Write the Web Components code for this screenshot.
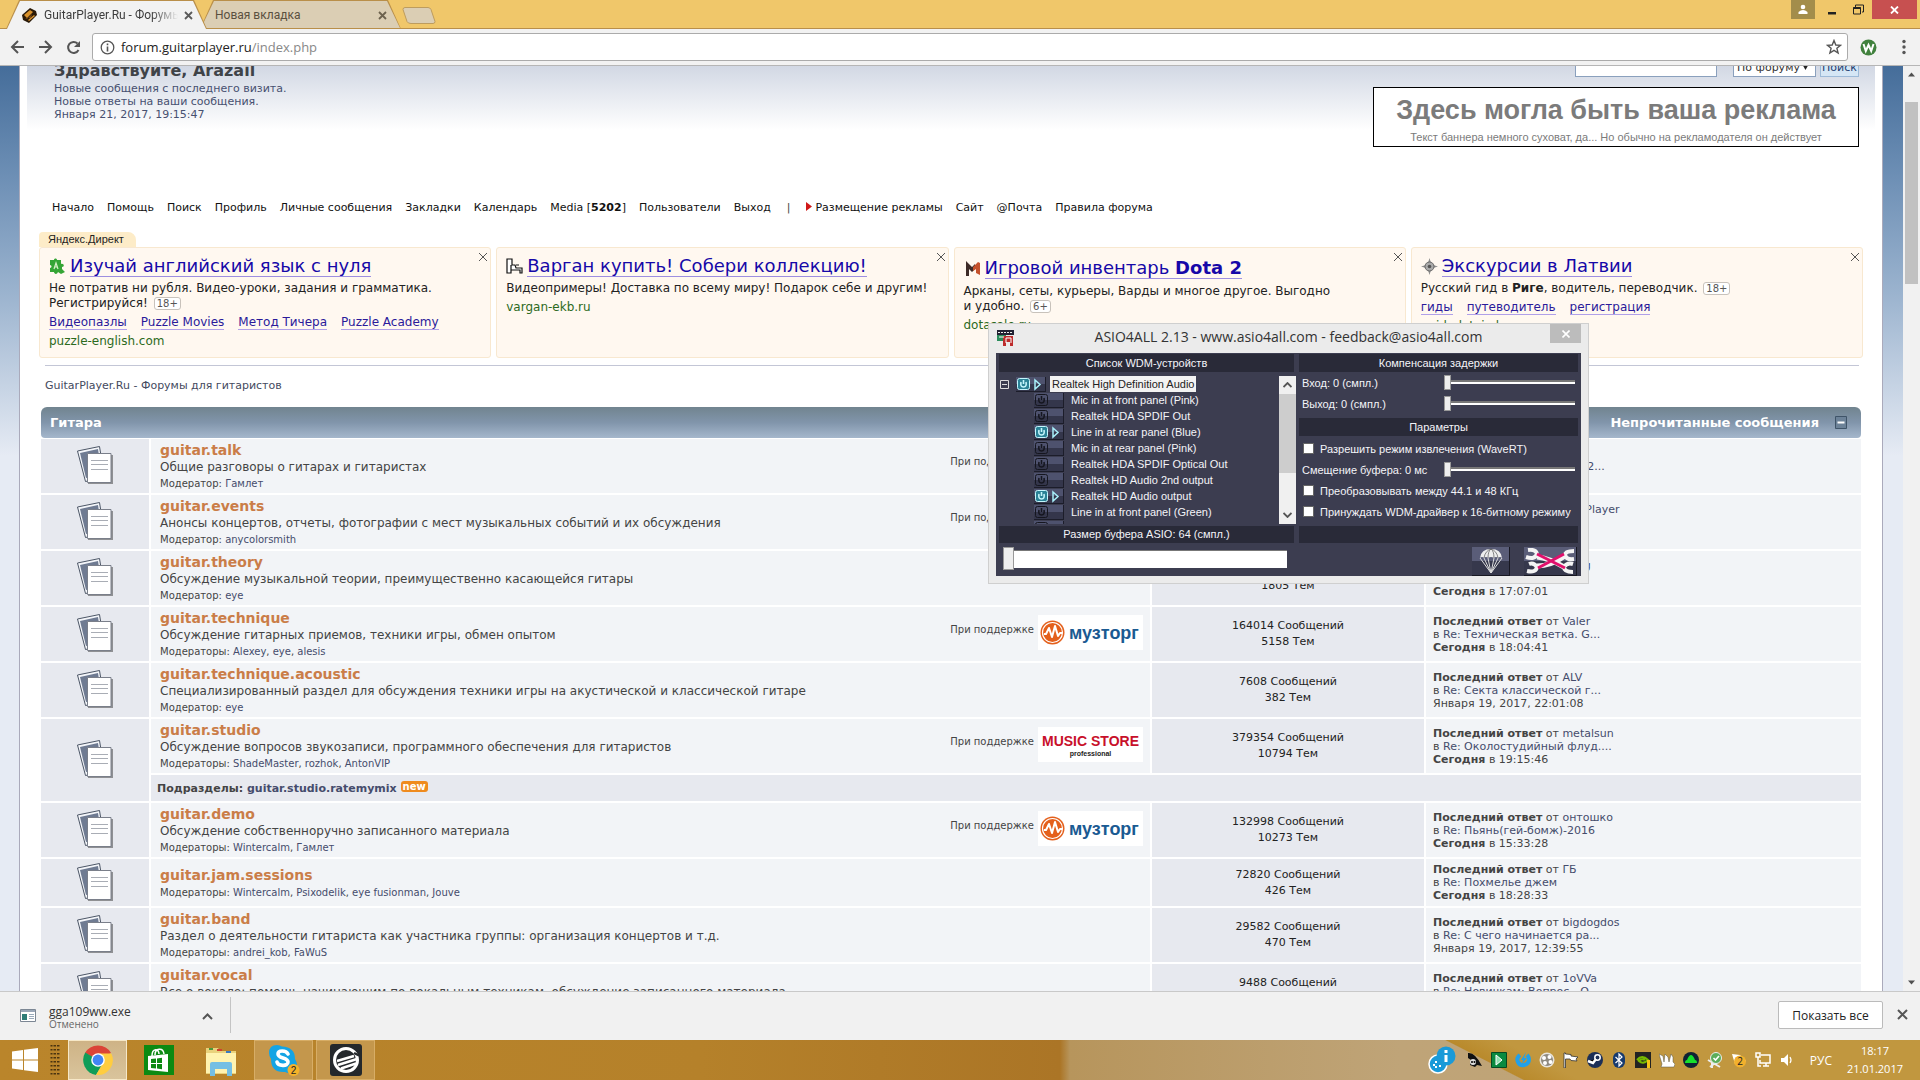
<!DOCTYPE html>
<html lang="ru">
<head>
<meta charset="utf-8">
<title>GuitarPlayer.Ru - Форумы для гитаристов</title>
<style>
  html, body { height: 100%; margin: 0; }
  body { overflow: hidden; font-family: "DejaVu Sans", sans-serif; font-size: 11px; color: #444; }
</style>
</head>
<body>
<desktop-screen>
  <tab-strip slot="tabs"></tab-strip>
  <browser-toolbar slot="toolbar"></browser-toolbar>
  <page-view slot="page">
    <forum-header></forum-header>
    <ad-row>
      <ad-card href-text="puzzle-english.com">
        <svg slot="icon" width="17" height="17" viewBox="0 0 17 17"><path fill="#35a535" d="M1 2h4c0-2 3-2 3 0h4v4c3-1 4 3 1 3v2l3 3-4 2-3-2c-1 3-4 2-4 0H1v-4c2 0 2-3 0-3z"/><path fill="none" stroke="#d8f0c8" stroke-width="1.200" d="m5 11 2-6 2 6m-3.500-2h3"/></svg>
        <span slot="title">Изучай английский язык с нуля</span>
        Не потратив ни рубля. Видео-уроки, задания и грамматика. Регистрируйся! <age-mark>18+</age-mark>
        <a slot="links" href="#">Видеопазлы</a><a slot="links" href="#">Puzzle Movies</a><a slot="links" href="#">Метод Тичера</a><a slot="links" href="#">Puzzle Academy</a>
      </ad-card>
      <ad-card href-text="vargan-ekb.ru">
        <svg slot="icon" width="17" height="17" viewBox="0 0 17 17"><path fill="#fff" stroke="#111" stroke-width="1.200" d="M1 1h5v6h3l1 3h6v5h-2v-3H5v3H1zM5 7v5M10 7h3"/></svg>
        <span slot="title">Варган купить! Собери коллекцию!</span>
        Видеопримеры! Доставка по всему миру! Подарок себе и другим!
      </ad-card>
      <ad-card href-text="dotasale.ru" tall>
        <svg slot="icon" width="17" height="17" viewBox="0 0 17 17"><path fill="#3d2b28" d="M2 1 8 7l3-3v5l-3 3-3-3v7H2z"/><path fill="#c4512c" d="m9 7 5-5 2 1v12l-4-2V9l-3 2z"/></svg>
        <span slot="title">Игровой инвентарь <b>Dota 2</b></span>
        Арканы, сеты, курьеры, Варды и многое другое. Выгодно<br>и удобно. <age-mark>6+</age-mark>
      </ad-card>
      <ad-card href-text="guide-latvia.lv">
        <svg slot="icon" width="17" height="17" viewBox="0 0 17 17"><path fill="#8d8d8d" d="m8.500 0 2 6.500 6.500 2-6.500 2-2 6.500-2-6.500-6.500-2 6.500-2z"/><circle cx="8.500" cy="8.500" r="4.500" fill="#aaa" stroke="#666"/><circle cx="8.500" cy="8.500" r="1.800" fill="#555"/></svg>
        <span slot="title">Экскурсии в Латвии</span>
        Русский гид в <b>Риге</b>, водитель, переводчик. <age-mark>18+</age-mark>
        <a slot="links" href="#">гиды</a><a slot="links" href="#">путеводитель</a><a slot="links" href="#">регистрация</a>
      </ad-card>
    </ad-row>
    <bread-crumb>GuitarPlayer.Ru - Форумы для гитаристов</bread-crumb>
    <forum-board></forum-board>
  </page-view>
  <download-shelf slot="shelf"></download-shelf>
  <task-bar slot="taskbar"></task-bar>
  <asio-dialog slot="window"></asio-dialog>
</desktop-screen>

<script>
const define = (name, html, setup) => customElements.define(name, class extends HTMLElement {
  constructor() {
    super();
    const t = document.createElement('template');
    t.innerHTML = html;
    this.attachShadow({ mode: 'open' }).append(t.content.cloneNode(true));
  }
  connectedCallback() { if (setup) setup(this, this.shadowRoot); }
});

define('desktop-screen', `
<style>
  :host { display: grid; grid-template-rows: 29px 37px minmax(0, 1fr) 49px 40px; height: 100vh; position: relative; }
</style>
<slot name="tabs"></slot><slot name="toolbar"></slot><slot name="page"></slot><slot name="shelf"></slot><slot name="taskbar"></slot><slot name="window"></slot>`);

define('tab-strip', `
<style>
  :host { display: flex; justify-content: space-between; align-items: flex-start; background: #f0c76a; border-bottom: 1px solid #b98f4a; box-sizing: border-box; color: #3c3c3c; }
  .tabs { display: flex; align-items: flex-start; padding-left: 6px; }
  .tab { display: flex; align-items: center; gap: 6px; height: 29px; width: 201px; box-sizing: border-box; padding: 1px 14px 0 15px; background: #b98f4a; clip-path: polygon(13px 0, 188px 0, 100% 100%, 0 100%); position: relative; z-index: 1; isolation: isolate; }
  .tab::before { content: ""; position: absolute; inset: 1px 0 0; z-index: -1; background: #f2f2f2; clip-path: polygon(14px 0, 187px 0, 200px 100%, 1px 100%); }
  .tab.idle { margin-left: -7px; z-index: 0; color: #5a5040; }
  .tab.idle::before { background: #dbceb4; inset: 1px 0 1px; }
  .label { flex: 1; overflow: hidden; white-space: nowrap; font: 12px/18px Roboto, sans-serif; }
  .fade { -webkit-mask: linear-gradient(90deg, #000 80%, transparent); mask: linear-gradient(90deg, #000 80%, transparent); }
  button { border: 0; background: none; padding: 0; display: grid; place-items: center; }
  .new { margin: 7px 0 0 1px; }
  .win { display: flex; }
  .win button { height: 19px; }
  .user { width: 24px; background: #a38d4b; } .min { width: 34px; } .max { width: 18px; } .close { width: 45px; margin: 0 3px 0 5px; }
  .win .close { background: #c75050; }
</style>
<div class="tabs">
  <div class="tab">
    <svg width="17" height="16" viewBox="0 0 17 16"><path fill="#2a1a08" d="M1 8 9 1l6 3 1 4-8 8-6-3z"/><path fill="#d9922c" d="m3 8 6-5 3 2-6 6zM7 13l6-5 1 1-6 5z"/><path fill="#7b4a13" d="m4 11 2 1 5-5-1 4"/></svg>
    <span class="label fade">GuitarPlayer.Ru - Форумы</span>
    <button aria-label="Закрыть"><svg width="9" height="9" viewBox="0 0 9 9"><path stroke="#5a5a5a" stroke-width="1.800" d="m1 1 7 7m0-7-7 7"/></svg></button>
  </div>
  <div class="tab idle">
    <span class="label">Новая вкладка</span>
    <button aria-label="Закрыть"><svg width="9" height="9" viewBox="0 0 9 9"><path stroke="#6d624e" stroke-width="1.800" d="m1 1 7 7m0-7-7 7"/></svg></button>
  </div>
  <button class="new" aria-label="Новая вкладка"><svg width="34" height="17" viewBox="0 0 34 17"><path fill="#dbceb4" stroke="#bd9c5e" d="M3 .5h23q2 0 3 2l4 12q0 2-2 2H9q-3 0-4-2L1 2.500Q1 .5 3 .5z"/></svg></button>
</div>
<div class="win">
  <button class="user" aria-label="Профиль"><svg width="10" height="11" viewBox="0 0 10 11"><circle cx="5" cy="3" r="2.300" fill="#fff"/><path fill="#fff" d="M.5 10V8q4.500-4 9 0v2z"/></svg></button>
  <button class="min" aria-label="Свернуть"><svg width="10" height="11" viewBox="0 0 10 11"><path fill="#222" d="M1 8h8v2.500H1z"/></svg></button>
  <button class="max" aria-label="Развернуть"><svg width="11" height="11" viewBox="0 0 11 11"><path fill="none" stroke="#222" d="M2.500 3V1h8v7H9"/><path fill="none" stroke="#222" d="M.5 3.500h7v6.500h-7z"/><path stroke="#222" stroke-width="2" d="M.5 4h7"/></svg></button>
  <button class="close" aria-label="Закрыть окно"><svg width="9" height="8" viewBox="0 0 9 8"><path stroke="#fff" stroke-width="1.800" d="m1 .5 7 7m0-7-7 7"/></svg></button>
</div>`);

define('browser-toolbar', `
<style>
  :host { display: flex; align-items: center; background: #f2f2f2; border-bottom: 1px solid #b6b6b6; box-sizing: border-box; padding: 0 11px 0 9px; gap: 12px; }
  button { border: 0; background: none; padding: 0; width: 16px; height: 16px; display: grid; place-items: center; }
  .box { flex: 1; display: flex; align-items: center; height: 28px; box-sizing: border-box; background: #fff; border: 1px solid #ababab; border-radius: 3px; padding: 0 5px 0 7px; gap: 6px; margin-left: -1px; font: 13px "Open Sans", sans-serif; }
  .url { flex: 1; color: #888; } .url b { font-weight: normal; color: #222; }
  .w { width: 17px; } .m { width: 10px; margin-left: 10px; }
</style>
<button aria-label="Назад"><svg width="15" height="14" viewBox="0 0 15 14"><path fill="none" stroke="#555" stroke-width="2" d="M14 7H2m6-6L2 7l6 6"/></svg></button>
<button aria-label="Вперёд"><svg width="15" height="14" viewBox="0 0 15 14"><path fill="none" stroke="#555" stroke-width="2" d="M1 7h12M7 1l6 6-6 6"/></svg></button>
<button aria-label="Обновить"><svg width="15" height="15" viewBox="0 0 15 15"><path fill="none" stroke="#555" stroke-width="2" d="M12.500 10A5.500 5.500 0 1 1 11.500 3.500"/><path fill="#555" d="M14 1v6H8z"/></svg></button>
<div class="box">
  <svg width="15" height="15" viewBox="0 0 15 15"><circle cx="7.500" cy="7.500" r="6.300" fill="none" stroke="#555" stroke-width="1.300"/><path stroke="#555" stroke-width="1.600" d="M7.500 3.500v1.800m0 1.200v5"/></svg>
  <span class="url"><b>forum.guitarplayer.ru</b>/index.php</span>
  <button aria-label="В закладки"><svg width="16" height="16" viewBox="0 0 16 16"><path fill="none" stroke="#555" stroke-width="1.400" d="m8 1.500 1.800 4.500 4.700.3-3.600 3 1.200 4.700L8 11.400 3.900 14l1.200-4.700-3.600-3L6.200 6z"/></svg></button>
</div>
<button class="w" aria-label="WOT"><svg width="17" height="17" viewBox="0 0 17 17"><circle cx="8.500" cy="8.500" r="8" fill="#40813d"/><path fill="none" stroke="#fff" stroke-width="2" d="m3.500 5 2.300 7 2.700-6 2.700 6 2.300-7"/></svg></button>
<button class="m" aria-label="Меню"><svg width="4" height="16" viewBox="0 0 4 16"><circle cx="2" cy="2.500" r="1.700" fill="#555"/><circle cx="2" cy="8" r="1.700" fill="#555"/><circle cx="2" cy="13.500" r="1.700" fill="#555"/></svg></button>`);

define('page-view', `
<style>
  :host { display: flex; overflow: hidden; min-height: 0; }
  .side { flex: 1; overflow: hidden; padding: 0 20px 0 19px; background: linear-gradient(#456d9a 0, #6d8fb5 110px, #9cb4cf 230px, #e6ebf4 390px); }
  .sheet { background: #fff; border: solid #aab; border-width: 0 1px; min-height: 100%; padding: 0 7px; }
  .bar { width: 17px; background: #f1f1f1; display: flex; flex-direction: column; justify-content: space-between; align-items: center; }
  .rail { flex: 1; padding-top: 19px; box-sizing: border-box; }
  .thumb { width: 13px; height: 182px; background: #c1c1c1; }
  svg { display: block; margin: 6px 0; }
</style>
<div class="side"><div class="sheet"><slot></slot></div></div>
<div class="bar">
  <svg width="7" height="5" viewBox="0 0 7 5"><path fill="#505050" d="M0 4.500 3.500.5 7 4.500z"/></svg>
  <div class="rail"><div class="thumb"></div></div>
  <svg width="7" height="5" viewBox="0 0 7 5"><path fill="#505050" d="m0 .5 3.500 4 3.500-4z"/></svg>
</div>`);

define('forum-header', `
<style>
  :host { display: block; background: linear-gradient(#d2d8e4, #fff 64px); }
  .top { display: flex; justify-content: space-between; align-items: flex-start; height: 133px; padding: 0 16px 0 27px; }
  .hello { margin-top: -6px; line-height: 13px; color: #475070; }
  h1 { margin: 0; font-size: 16px; line-height: 22px; color: #3f4348; }
  .right { display: flex; flex-direction: column; align-items: flex-end; gap: 10px; margin-top: -9px; }
  form { display: flex; align-items: flex-end; gap: 4px; }
  input { width: 142px; height: 20px; box-sizing: border-box; border: 1px solid #8aa0bd; margin-right: 12px; background: #fff; }
  .pick { display: grid; grid-template-columns: 1fr; align-items: center; }
  .pick > * { grid-area: 1 / 1; }
  .pick svg { justify-self: end; margin-right: 8px; pointer-events: none; }
  select { appearance: none; -webkit-appearance: none; width: 83px; height: 20px; box-sizing: border-box; border: 1px solid #8aa0bd; font: 11px "DejaVu Sans", sans-serif; padding: 1px 0 0 3px; background: #fff; color: #333; }
  form button { width: 39px; height: 20px; box-sizing: border-box; border: 1px solid #9dbad8; background: #d5e6f5; font: 11px "DejaVu Sans", sans-serif; color: #223d70; padding: 1px 0 0; white-space: nowrap; }
  .banner { width: 486px; height: 60px; box-sizing: border-box; border: 1px solid #000; background: #fff; text-align: center; font-family: "Liberation Sans", sans-serif; color: #7b7b7b; }
  .banner strong { display: block; font-size: 27px; line-height: 44px; }
  .banner span { display: block; font-size: 11px; line-height: 11px; }
  nav { display: flex; gap: 13px; padding: 0 25px; line-height: 18px; margin-bottom: 15px; white-space: nowrap; }
  nav a { color: #111; text-decoration: none; }
  nav span { padding: 0 3px; }
  nav svg { margin-right: 3px; }
</style>
<div class="top">
  <div class="hello"><h1>Здравствуйте, Arazail</h1>Новые сообщения с последнего визита.<br>Новые ответы на ваши сообщения.<br>Января 21, 2017, 19:15:47</div>
  <div class="right">
    <form><input type="text" aria-label="Запрос"><div class="pick"><select aria-label="Область поиска"><option>По форуму</option></select><svg width="5" height="5" viewBox="0 0 5 5"><path fill="#222" d="M0 .5h5L2.500 5z"/></svg></div><button type="button">Поиск</button></form>
    <div class="banner"><strong>Здесь могла быть ваша реклама</strong><span>Текст баннера немного суховат, да... Но обычно на рекламодателя он действует</span></div>
  </div>
</div>
<nav><a href="#">Начало</a><a href="#">Помощь</a><a href="#">Поиск</a><a href="#">Профиль</a><a href="#">Личные сообщения</a><a href="#">Закладки</a><a href="#">Календарь</a><a href="#">Media [<b>5202</b>]</a><a href="#">Пользователи</a><a href="#">Выход</a><span>|</span><a href="#"><svg width="6" height="9" viewBox="0 0 6 9"><path fill="#d01818" d="m0 0 6 4.500L0 9z"/></svg>Размещение рекламы</a><a href="#">Сайт</a><a href="#">@Почта</a><a href="#">Правила форума</a></nav>`);

define('ad-row', `
<style>
  :host { display: block; padding: 0 12px; }
  .mark { display: inline-block; background: #fdecc8; color: #222; font: 11px/15px "Liberation Sans", sans-serif; height: 15px; padding: 0 12px 0 9px; border-radius: 4px 8px 0 0; vertical-align: top; }
  .row { display: flex; gap: 5px; min-height: 111px; }
</style>
<div class="mark">Яндекс.Директ</div><div class="row"><slot></slot></div>`);

define('age-mark', `
<style>:host { display: inline-block; font-size: 10px; line-height: 11px; color: #555; border: 1px solid #c8c2bb; border-radius: 3px; padding: 0 2px; margin-left: 2px; background: #fff; }</style><slot></slot>`);

define('ad-card', `
<style>
  :host { flex: 1 1 0; min-width: 0; box-sizing: border-box; background: #fff8f0; border: 1px solid #f8e8d0; border-radius: 3px; padding: 6px 9px 0; position: relative; color: #222; font-size: 12px; line-height: 15px; }
  .head { display: flex; align-items: center; gap: 4px; height: 24px; margin-bottom: 3px; }
  :host([tall]) .head { height: 28px; margin-bottom: 2px; }
  .head a { color: #1608a8; text-decoration: none; font-size: 18px; line-height: 20px; border-bottom: 1px solid #9d8fe0; white-space: nowrap; }
  .text { padding-right: 10px; }
  .links { display: flex; gap: 14px; margin-top: 4px; white-space: nowrap; }
  .links.none { display: none; }
  ::slotted(a) { color: #2a1a9a; text-decoration: none; border-bottom: 1px solid #b0a0e8; line-height: 14px; }
  .url { display: block; margin-top: 4px; color: #2c6a1d; text-decoration: none; line-height: 15px; }
  .x { position: absolute; top: 4px; right: 2px; border: 0; background: none; padding: 0; width: 10px; height: 10px; }
  .x svg { display: block; }
</style>
<div class="head"><slot name="icon"></slot><a href="#"><slot name="title"></slot></a></div>
<div class="text"><slot></slot></div>
<div class="links"><slot name="links"></slot></div>
<a class="url" href="#"></a>
<button class="x" aria-label="Скрыть"><svg width="10" height="10" viewBox="0 0 10 10"><path stroke="#555" d="m1 1 8 8m0-8-8 8"/></svg></button>`,
(el, root) => {
  root.querySelector('.url').textContent = el.getAttribute('href-text');
  root.querySelector('.links').classList.toggle('none', !el.querySelector('[slot=links]'));
});

define('bread-crumb', `
<style>:host { display: block; margin: 7px 16px 0 18px; padding: 10px 0 12px; border-top: 1px solid #c3c6d6; line-height: 19px; color: #444a60; }</style><slot></slot>`);

define('sponsor-logo', `
<style>:host { display: block; width: 105px; height: 35px; background: #fff; } svg { display: block; }
 .m { display: flex; flex-direction: column; align-items: center; padding-top: 5px; font: bold 14px/18px "Liberation Sans", sans-serif; color: #c8102a; white-space: nowrap; }
 .m small { font: bold 7px/8px "Liberation Sans", sans-serif; color: #222; }
 .z { display: flex; align-items: center; gap: 4px; height: 35px; padding-left: 2px; font: bold 18px/20px "Liberation Sans", sans-serif; color: #1a5a92; }
</style><div></div>`,
(el, root) => {
  const box = root.querySelector('div');
  const store = el.getAttribute('kind') === 'store';
  box.className = store ? 'm' : 'z';
  box.innerHTML = store ? 'MUSIC STORE<small>professional</small>'
    : '<svg width="25" height="27" viewBox="0 0 25 27"><circle cx="12.500" cy="13.500" r="12" fill="#e4601c"/><circle cx="12.500" cy="13.500" r="10" fill="none" stroke="#fff" stroke-width="1.200"/><path fill="none" stroke="#fff" stroke-width="2" stroke-linejoin="round" d="M4 15h2l3-6 3 9 3-11 3 10 2-3h2"/></svg><span>музторг</span>';
});

const rows = [
  ['guitar.talk', 'Общие разговоры о гитарах и гитаристах', 'Гамлет', 'z', '98211', '3120', 'Alex', 'О гитарных мелочах 2...', '*18:59:10'],
  ['guitar.events', 'Анонсы концертов, отчеты, фотографии с мест музыкальных событий и их обсуждения', 'anycolorsmith', 'z', '48120', '2110', 'GuitPlayer', 'Концерт', '*12:02:44'],
  ['guitar.theory', 'Обсуждение музыкальной теории, преимущественно касающейся гитары', 'eye', '', '49120', '1805', 'guitg', 'Гармония и лад...', '*17:07:01'],
  ['guitar.technique', 'Обсуждение гитарных приемов, техники игры, обмен опытом', 'Alexey, eye, alesis', 'z', '164014', '5158', 'Valer', 'Техническая ветка. G...', '*18:04:41'],
  ['guitar.technique.acoustic', 'Специализированный раздел для обсуждения техники игры на акустической и классической гитаре', 'eye', '', '7608', '382', 'ALV', 'Секта классической г...', 'Января 19, 2017, 22:01:08'],
  ['guitar.studio', 'Обсуждение вопросов звукозаписи, программного обеспечения для гитаристов', 'ShadeMaster, rozhok, AntonVIP', 'store', '379354', '10794', 'metalsun', 'Околостудийный флуд....', '*19:15:46', 'guitar.studio.ratemymix'],
  ['guitar.demo', 'Обсуждение собственноручно записанного материала', 'Wintercalm, Гамлет', 'z', '132998', '10273', 'онтошко', 'Пьянь(гей-бомж)-2016', '*15:33:28'],
  ['guitar.jam.sessions', '', 'Wintercalm, Psixodelik, eye fusionman, Jouve', '', '72820', '426', 'ГБ', 'Похмелье джем', '*18:28:33'],
  ['guitar.band', 'Раздел о деятельности гитариста как участника группы: организация концертов и т.д.', 'andrei_kob, FaWuS', '', '29582', '470', 'bigdogdos', 'С чего начинается ра...', 'Января 19, 2017, 12:39:55'],
  ['guitar.vocal', 'Все о вокале: помощь начинающим по вокальным техникам, обсуждение записанного материала', 'Kalinin', '', '9488', '310', '1oVVa', 'Новичкам: Вопрос - О...', '*11:20:17']
];
const docs = '<svg width="38" height="38" viewBox="0 0 38 38"><path fill="#f4f6fa" stroke="#4c5666" d="m1.500 5 22-4.500 5 31-19 4z"/><path fill="#6f7b92" d="m4 7 18-4 4 26-16 3z"/><path fill="#555" opacity=".6" d="M12 9h25v29H12z"/><path fill="#fff" stroke="#7a7f8a" d="M11.500 7.500h23.500v29H11.500z"/><path stroke="#a9adb5" d="M15 14.500h17M15 18.500h17M15 23.500h17"/></svg>';

define('forum-board', `
<style>
  :host { display: block; padding: 0 14px; }
  header { display: flex; align-items: center; justify-content: space-between; height: 31px; padding: 0 14px 0 9px; border-radius: 6px 6px 4px 4px; background: linear-gradient(#71848f, #8195ab 50%, #a5b7cc); color: #fff; font-weight: bold; font-size: 13px; }
  header span:last-child { display: flex; gap: 16px; align-items: center; }
  table { border-collapse: separate; border-spacing: 2px 2px; margin: -1px -2px 0; width: calc(100% + 4px); table-layout: fixed; }
  td { padding: 0; height: 54px; vertical-align: middle; background: #f2f4f7; }
  tr.low td { height: 47px; }
  td.icon { width: 108px; background: #e7e9ef; } td.icon svg { display: block; margin: -2px auto 0 35px; }
  td.num { width: 272px; background: #e7e9ef; text-align: center; line-height: 16px; color: #222; }
  td.last { width: 428px; padding-left: 7px; line-height: 13px; }
  .cell { display: flex; align-items: flex-start; justify-content: space-between; padding: 2px 7px 0 9px; }
  h2 { margin: 0; font-size: 14px; line-height: 17px; }
  h2 a { color: #ca7d48; }
  a { color: #454c6c; text-decoration: none; }
  p { margin: 0; font-size: 12px; line-height: 16px; white-space: nowrap; }
  .mod { font-size: 10px; line-height: 17px; }
  .sup { display: flex; gap: 4px; line-height: 30px; padding-top: 5px; height: 35px; font-size: 10px; }
  tr.sub td { height: 26px; background: #e7e9ef; font-weight: bold; padding-left: 6px; }
  tr.sub i { font: bold 10px/11px "DejaVu Sans", sans-serif; display: inline-block; background: #ef8b1e; color: #fff; border-radius: 3px; padding: 0 2px; height: 11px; vertical-align: 2px; }
</style>
<header><span>Гитара</span><span>Непрочитанные сообщения <svg width="12" height="13" viewBox="0 0 12 13"><path fill="#6c8298" stroke="#3f5468" d="M.5.5h11v12H.5z"/><path stroke="#fff" stroke-width="2" d="M2.500 6.500h7"/></svg></span></header>
<table><tbody></tbody></table>`,
(el, root) => {
  root.querySelector('tbody').innerHTML = rows.map(([n, d, m, s, c, t, who, re, when, sub]) => `
  <tr class="${d ? '' : 'low'}"><td class="icon"${sub ? ' rowspan="2"' : ''}>${docs}</td>
  <td><div class="cell"><div><h2><a href="#">${n}</a></h2>${d ? `<p>${d}</p>` : ''}<div class="mod">Модератор${m.includes(',') ? 'ы' : ''}: ${m.split(', ').map(x => `<a href="#">${x}</a>`).join(', ')}</div></div>${s ? `<div class="sup">При поддержке <sponsor-logo kind="${s}"></sponsor-logo></div>` : ''}</div></td>
  <td class="num">${c} Сообщений<br>${t} Тем</td>
  <td class="last"><b>Последний ответ</b> от <a href="#">${who}</a><br>в <a href="#">Re: ${re}</a><br>${when[0] === '*' ? '<b>Сегодня</b> в ' + when.slice(1) : when}</td></tr>
  ${sub ? `<tr class="sub"><td colspan="3">Подразделы: <a href="#">${sub}</a> <i>new</i></td></tr>` : ''}`).join('');
});

define('download-shelf', `
<style>
  :host { display: flex; align-items: center; justify-content: space-between; background: #f1f1f1; border-top: 1px solid #c9c9c9; box-sizing: border-box; padding: 0 12px 2px 20px; font-family: "Open Sans", sans-serif; }
  .item { display: flex; align-items: center; width: 210px; height: 36px; border-right: 1px solid #c4c4c4; gap: 13px; }
  .name { flex: 1; display: flex; flex-direction: column; font-size: 12px; line-height: 15px; color: #333; padding-top: 4px; }
  small { font-size: 10px; line-height: 11px; color: #666; }
  .item button, .x { border: 0; background: none; padding: 0; }
  .item button { margin-right: 17px; }
  .end { display: flex; align-items: center; gap: 14px; }
  .all { width: 105px; height: 28px; border: 1px solid #bbb; border-radius: 2px; background: #fff; font: 12px "Open Sans", sans-serif; color: #222; padding: 0; }
</style>
<div class="item">
  <svg width="16" height="13" viewBox="0 0 16 13"><path fill="#fff" stroke="#7c8794" d="M.5.5h15v12H.5z"/><path fill="#9aa7b8" d="M1 1h14v2H1z"/><path fill="#2f7d78" d="M2 5h5v6H2z"/><path stroke="#9ab" d="M9 5.500h5M9 7.500h5M9 9.500h5"/></svg>
  <div class="name">gga109ww.exe<small>Отменено</small></div>
  <button aria-label="Меню загрузки"><svg width="11" height="7" viewBox="0 0 11 7"><path fill="none" stroke="#555" stroke-width="2" d="m1 6 4.500-4.500L10 6"/></svg></button>
</div>
<div class="end"><button class="all">Показать все</button><button class="x" aria-label="Закрыть"><svg width="11" height="11" viewBox="0 0 11 11"><path stroke="#555" stroke-width="2" d="m1 1 9 9m0-9-9 9"/></svg></button></div>`);

define('task-bar', `
<style>
  :host { display: flex; justify-content: space-between; color: #fff; font-family: "Open Sans", sans-serif;
    background: linear-gradient(207deg, #c1973f 0 190px, #b98a2c 215px, transparent 216px), linear-gradient(90deg, #ba852b 0, #b5812a 700px, #ab7526 1060px, #b7955c 1070px, #bfa478 1400px, #bfa372 100%); }
  .left, .tray { display: flex; align-items: center; }
  button { border: 0; background: none; padding: 0; height: 40px; display: grid; place-items: center; box-sizing: border-box; width: 59px; }
  button svg { display: block; }
  .start { width: 50px; } .grip { width: 10px; margin-right: 8px; display: block; }
  .on { border: 1px solid #f6e8c8; background: linear-gradient(#ceb386, #d9c49c); }
  .run { border: 1px solid #d7ad66; background: #c4974c; margin-left: 3px; }
  .store { width: 64px; } .files { width: 60px; }
  .tray { gap: 8px; } .tray svg { display: block; width: 16px; height: 16px; } .tray svg.big { width: 28px; height: 28px; margin-right: 3px; }
  .lang { font-size: 12px; margin: 0 3px; width: 30px; text-align: center; } .clock { font-size: 11px; line-height: 18px; text-align: center; margin-right: 17px; }
</style>
<div class="left">
  <button class="start" aria-label="Пуск"><svg width="28" height="26" viewBox="0 0 28 26"><path fill="#fff" d="M1 4.500 12 3v9.500H1zM13 2.800 27 1v11.500H13zM1 13.500h11V23L1 21.500zM13 13.500h14V25l-14-1.800z"/></svg></button>
  <svg class="grip" width="10" height="32" viewBox="0 0 10 32"><path stroke="#4b3410" stroke-width="9" stroke-dasharray="1.500 2.500" d="M5 1v30"/><path stroke="#b9832b" d="M3 0v32M6.500 0v32"/></svg>
  <button class="on" aria-label="Chrome"><svg width="30" height="30" viewBox="0 0 30 30"><path fill="#db4437" d="M15 15 2 8a15 15 0 0 1 26 0z"/><path fill="#0f9d58" d="M15 15 2.200 7.500A15 15 0 0 0 13 29.900l6-10z"/><path fill="#ffcd40" d="M15 8.500h13.300A15 15 0 0 1 13 29.900L20 18z"/><circle cx="15" cy="15" r="6.800" fill="#fff"/><circle cx="15" cy="15" r="5.400" fill="#4285f4"/></svg></button>
  <button class="store" aria-label="Магазин"><svg width="30" height="30" viewBox="0 0 30 30"><path fill="#0c8a12" d="M0 0h30v30H0z"/><path fill="#fff" d="m4 11 20-2v18L4 25z"/><path fill="none" stroke="#fff" stroke-width="1.500" d="M8 11c0-8 7-8 7-2m-4 1c0-7 8-8 9-1"/><path fill="#0c8a12" d="m7 14 5-.5V18H7zm6-.6 5-.6V18h-5zM7 19h5v4.500l-5-.5zm6 0h5v5.300l-5-.7z"/></svg></button>
  <button class="files" aria-label="Проводник"><svg width="32" height="31" viewBox="0 0 32 31"><path fill="#e9d27c" d="M1 3h12l2 3h16v23H1z"/><path fill="#fff3b0" d="M1 8h30v20H1z"/><path fill="#4a9a3c" d="M4 3h4v2H4z"/><path fill="#d04030" d="M12 4h5v2h-5z"/><path fill="#3a7bc0" d="M21 6h5v2h-5z"/><path fill="#75bfe4" d="M5 19q0-2 2-2h18q2 0 2 2v12h-5v-7H10v7H5z"/></svg></button>
  <button class="run" aria-label="Skype"><svg width="32" height="32" viewBox="0 0 32 32"><path fill="#14a4e4" d="M9 1q3 0 5 1.500Q27 3 27 15q2 3 2 6 0 8-8 8-2 0-4-1Q3 29 3 15 1 12 1 9q0-8 8-8z"/><path fill="none" stroke="#fff" stroke-width="3.600" stroke-linecap="round" d="M20 10c-2-4-10-4-10 0 0 5 10 3 10 8 0 5-10 4-11 0"/><circle cx="25.500" cy="26" r="6" fill="#f5b22a"/><text x="25.500" y="29.500" font-size="10" text-anchor="middle" fill="#222">2</text></svg></button>
  <button class="run" aria-label="Музыка"><svg width="32" height="32" viewBox="0 0 32 32"><rect width="32" height="32" rx="3" fill="#24282c"/><circle cx="16" cy="16" r="11.500" fill="none" stroke="#fff" stroke-width="3"/><path stroke="#fff" stroke-width="2.500" d="m7 17 17-5M8 21l19-6M11 24.500l15-5"/><path stroke="#24282c" stroke-width="2.500" d="m24 9 5 2.500"/></svg></button>
</div>
<div class="tray">
  <svg class="big" viewBox="0 0 28 28"><circle cx="10" cy="18" r="9" fill="#1a9ad8" stroke="#fff" stroke-width="1.500"/><circle cx="18" cy="10" r="9.500" fill="#1a9ad8"/><path stroke="#fff" stroke-width="3" d="M18 4v3m0 2v7"/><path stroke="#fff" stroke-width="2" d="M8 15v2m0 3v2m-3-3h2m4 1h2"/></svg>
  <svg viewBox="0 0 16 16"><path fill="#111" d="M1 1q7-1 14 13l-5-1-2 2-5-2L4 8 1 6z"/><circle cx="6" cy="10" r="3" fill="#ddd"/><circle cx="5" cy="10" r="1"/><circle cx="7.500" cy="10" r="1"/></svg>
  <svg viewBox="0 0 16 16"><path fill="#0a8a40" stroke="#054a22" d="M.5.5h15v15H.5z"/><path fill="#8fe0b0" stroke="#fff" d="m5 3 6 5-6 5z"/></svg>
  <svg viewBox="0 0 16 16"><path fill="none" stroke="#22a0e8" stroke-width="4" d="M5 3q-4 3-2 7 2 4 6 3 5-1 5-6 0-2-2-4"/><path fill="#22a0e8" d="m11 0-2 6h3l-5 6 1-4H6z"/></svg>
  <svg viewBox="0 0 16 16"><circle cx="8" cy="8" r="7.500" fill="#e8e4dc"/><circle cx="8" cy="8" r="6" fill="#8f8a80"/><circle cx="5" cy="6" r="2" fill="#fff"/><circle cx="10.500" cy="5" r="2" fill="#fff"/><circle cx="6" cy="11" r="2" fill="#fff"/><circle cx="11.500" cy="10" r="2" fill="#fff"/></svg>
  <svg viewBox="0 0 16 16"><path fill="#fff" stroke="#333" stroke-width=".8" d="M1 1h1.500v1L8 2.500V4l7 1-2 2 1 2-6-.5L7 7 2.500 7v9H1z"/></svg>
  <svg viewBox="0 0 16 16"><circle cx="8" cy="8" r="8" fill="#1c2f57"/><circle cx="10.500" cy="5.500" r="2.700" fill="none" stroke="#fff" stroke-width="1.500"/><path stroke="#fff" stroke-width="2.500" d="m1 9 5 2 3-4"/></svg>
  <svg viewBox="0 0 16 16"><rect x="2" width="12" height="16" rx="6" fill="#163a6e"/><path fill="none" stroke="#fff" stroke-width="1.200" d="m4.500 5 6.500 6-3 3V2l3 3-6.500 6"/></svg>
  <svg viewBox="0 0 16 16"><path fill="#222" d="M0 0h16v16H0z"/><path fill="none" stroke="#76b900" stroke-width="2" d="M2 8q5-6 11 0-5 5-9 1 3-3 6-1"/><path fill="#f5c518" d="M12 8h3v8h-3z"/></svg>
  <svg viewBox="0 0 16 16"><path fill="#fff" stroke="#554" stroke-width=".5" d="m0 2 4 2 1 6 1-8 3 3 1 5 2-8 2 3v5l2 2-1 3H2l1-3z"/></svg>
  <svg viewBox="0 0 16 16"><circle cx="8" cy="8" r="8" fill="#123"/><path fill="#17e02c" d="M2 11q0-3 2-3 4-10 8 0 2 0 2 3z"/></svg>
  <svg viewBox="0 0 16 16"><path stroke="#eee" stroke-width="2" d="m1 8 12 7M3 15l9-7M5 9v7"/><circle cx="9" cy="6" r="5.500" fill="#5cae5a" stroke="#eee"/><path fill="none" stroke="#fff" stroke-width="1.600" d="m6.500 6 2 2 3.500-4"/></svg>
  <svg viewBox="0 0 16 16"><path fill="#fff" d="m1 2 8 1 6 6-4 6-7-3z"/><circle cx="9" cy="9.500" r="6" fill="#f2b02c"/><text x="9" y="13.200" font-size="10" text-anchor="middle" fill="#222">2</text></svg>
  <svg viewBox="0 0 16 16"><path fill="none" stroke="#fff" stroke-width="1.500" d="M6 3h9v8H5V8M8 14h6M11 11v3M1 1h4v4H1zM3 5v9h3"/></svg>
  <svg viewBox="0 0 16 16"><path fill="#fff" d="M2 6h3l4-4v12l-4-4H2z"/><path fill="none" stroke="#fff" stroke-width="1.200" d="M11 5q2 3 0 6"/></svg>
  <span class="lang">РУС</span>
  <div class="clock">18:17<br>21.01.2017</div>
</div>`);

const devices = [['Mic in at front panel (Pink)'], ['Realtek HDA SPDIF Out'], ['Line in at rear panel (Blue)', 1], ['Mic in at rear panel (Pink)'], ['Realtek HDA SPDIF Optical Out'], ['Realtek HD Audio 2nd output'], ['Realtek HD Audio output', 1], ['Line in at front panel (Green)'], ['Realtek HD Audio 2nd input']];
define('device-switch', `
<style>:host { display: block; width: 30px; height: 15px; } svg { display: block; }</style>
<svg width="30" height="15" viewBox="0 0 30 15"><rect width="30" height="15" fill="#1c1d2a"/><rect width="29" height="14" fill="#4e526e"/><rect y="7" width="29" height="7" fill="#34364b"/><g class="k" fill="none" stroke="#15161f"><rect x="1.500" y="1.500" width="12" height="11" rx="2" stroke-width="1"/><path stroke-width="1.600" d="M5 5q-1 5 2.500 5T10 5M7.500 3v4"/></g><path class="p" fill="none" d="m19 3 5 4.500-5 4.500z"/></svg>`,
(el, root) => {
  if (!el.hasAttribute('on')) return;
  root.querySelector('.k').setAttribute('stroke', '#c4f6fc');
  root.querySelector('.k rect').setAttribute('fill', '#2a8296');
  root.querySelector('.p').setAttribute('stroke', '#a8f0fa');
  root.querySelector('.p').setAttribute('stroke-width', '1.500');
});

define('asio-dialog', `
<style>
  :host { position: absolute; left: 988px; top: 323px; width: 601px; box-sizing: border-box; background: #ebebeb; border: 1px solid #cfcfcf; padding: 0 7px 7px; color: #f4f4f8; font: 11px "Liberation Sans", sans-serif; z-index: 5; }
  .bar { display: grid; grid-template-columns: 31px 1fr 31px; align-items: center; height: 29px; color: #333; font: 14px/26px "Open Sans", sans-serif; text-align: center; }
  .bar span { align-self: start; }
  .bar svg { display: block; margin-left: 1px; }
  .bar button { align-self: start; height: 19px; border: 0; background: #bcbcbc; display: grid; place-items: center; padding: 0; }
  .bar button svg { margin: 0; }
  .body { background: #3c3d50; height: 223px; padding: 1px 3px 0; box-sizing: border-box; }
  .cols { display: grid; grid-template-columns: 295px 1fr; column-gap: 5px; }
  h3 { margin: 0; height: 18px; font: 11px/18px "Liberation Sans", sans-serif; background: #292a38; text-align: center; }
  .list { display: flex; justify-content: space-between; height: 148px; margin-top: 4px; overflow: hidden; width: 297px; }
  ul { list-style: none; margin: 0; padding: 0 0 0 1px; }
  li { display: flex; align-items: center; height: 16px; gap: 7px; padding-left: 34px; white-space: nowrap; }
  li.root { padding-left: 0; gap: 4px; }
  li.root device-switch { margin-left: 3px; }
  li.root b { font-weight: normal; background: #f2f2f2; color: #222; padding: 0 2px; line-height: 16px; }
  .sb { width: 17px; background: #f0f0f0; display: flex; flex-direction: column; align-items: center; }
  .sb svg { margin: 6px 0; } .sb div { width: 17px; height: 79px; background: #cdcdcd; margin-bottom: auto; }
  .opts { padding: 0 3px; }
  .r { display: flex; align-items: center; justify-content: space-between; height: 21px; }
  .r.check { justify-content: flex-start; gap: 6px; }
  .gapped { margin: 4px -3px 2px; }
  input { margin: 0; appearance: none; -webkit-appearance: none; background: none; }
  input[type=checkbox] { width: 11px; height: 11px; background: #fff; border: 1px solid #666; box-sizing: border-box; margin-left: 1px; }
  input[type=range] { width: 131px; height: 15px; background: linear-gradient(#777 0 2px, #fff 2px 4px) 0 5px / 100% 4px no-repeat; }
  input::-webkit-slider-thumb { -webkit-appearance: none; width: 7px; height: 15px; background: #eee; border: 1px solid #999; box-sizing: border-box; }
  .foot { margin-top: 2px; }
  .foot h3 { height: 17px; line-height: 17px; }
  .low { display: flex; justify-content: space-between; align-items: flex-start; padding: 4px 1px 0 4px; }
  .low input[type=range] { width: 284px; height: 23px; background: linear-gradient(#777 0 1px, #fff 1px) 0 3px / 100% 18px no-repeat; }
  .low input::-webkit-slider-thumb { width: 11px; height: 23px; }
  .btns { display: flex; gap: 14px; }
  .btns button { height: 29px; width: 38px; padding: 0; border: 0; border-right: 1px solid #181822; border-bottom: 1px solid #181822; background: linear-gradient(#5a5d78 50%, #36384c 50%); display: grid; place-items: center; }
  .btns button + button { width: 53px; }
</style>
<div class="bar">
  <svg width="17" height="17" viewBox="0 0 17 17"><path fill="#223" d="M0 0h17v5H0z"/><path stroke="#eee" stroke-dasharray="2 1" d="M1 2.500h15"/><path fill="#2b8c5c" d="M0 5h9v6H0z"/><path fill="#bd2c2c" d="M6 6h10v10h-3v-4H9v4H6z"/><path fill="none" stroke="#fff" d="M2 7h5M9 8h5v5m-5-5v5"/></svg>
  <span>ASIO4ALL 2.13 - www.asio4all.com - feedback@asio4all.com</span>
  <button aria-label="Закрыть"><svg width="8" height="8" viewBox="0 0 8 8"><path stroke="#fff" stroke-width="1.600" d="m.5.5 7 7m0-7-7 7"/></svg></button>
</div>
<div class="body">
  <div class="cols">
    <div><h3>Список WDM-устройств</h3>
      <div class="list"><ul></ul><div class="sb"><svg width="9" height="6" viewBox="0 0 9 6"><path fill="none" stroke="#555" stroke-width="1.800" d="m.5 5 4-4 4 4"/></svg><div></div><svg width="9" height="6" viewBox="0 0 9 6"><path fill="none" stroke="#555" stroke-width="1.800" d="m.5 1 4 4 4-4"/></svg></div></div>
    </div>
    <div><h3>Компенсация задержки</h3>
      <div class="opts">
        <label class="r">Вход: 0 (смпл.)<input type="range" value="0"></label>
        <label class="r">Выход: 0 (смпл.)<input type="range" value="0"></label>
        <h3 class="gapped">Параметры</h3>
        <label class="r check"><input type="checkbox">Разрешить режим извлечения (WaveRT)</label>
        <label class="r">Смещение буфера: 0 мс<input type="range" value="0"></label>
        <label class="r check"><input type="checkbox">Преобразовывать между 44.1 и 48 КГц</label>
        <label class="r check"><input type="checkbox">Принуждать WDM-драйвер к 16-битному режиму</label>
      </div>
    </div>
  </div>
  <div class="cols foot"><h3>Размер буфера ASIO: 64 (смпл.)</h3><h3></h3></div>
  <div class="low"><input type="range" value="0" aria-label="Размер буфера">
    <div class="btns">
      <button aria-label="Сброс"><svg width="24" height="26" viewBox="0 0 24 26"><path fill="#eee" d="M1 10Q2 1 12 1t11 9q-2-2-4 0-2-2-4 0-3-2-6 0-2-2-4 0-2-2-4 0z"/><path fill="none" stroke="#ddd" d="M1 10l11 15L23 10M5 10l7 15 7-15M9 10l3 15 3-15"/><path fill="none" stroke="#555" stroke-width=".7" d="M9 10q0-7 3-9 3 2 3 9M5 10q1-7 7-9 6 2 7 9"/></svg></button>
      <button aria-label="Настройка"><svg width="52" height="26" viewBox="0 0 52 26"><g fill="none" stroke="#f4f4f4"><path stroke-width="5" d="M13 9q12 1 27 10M13 18q14 0 28-10"/><path stroke-width="4" d="M4 2q8-1 9 4-2 6-11 3M3 23q9 2 10-4-3-5-8-3M50 3q-9 0-9 4 1 5 9 4M49 24q-9 0-9-5 3-5 9-3"/></g><path stroke="#e0106c" stroke-width="3" d="m13 6 28 14M14 20 40 6"/></svg></button>
    </div>
  </div>
</div>`,
(el, root) => {
  root.querySelector('ul').innerHTML = '<li class="root"><svg width="9" height="9" viewBox="0 0 9 9"><path fill="none" stroke="#ddd" d="M.5.5h8v8h-8zM2 4.500h5"/></svg><device-switch on></device-switch><b>Realtek High Definition Audio</b></li>'
    + devices.map(([n, on]) => `<li><device-switch${on ? ' on' : ''}></device-switch>${n}</li>`).join('');
});
</script>
</body>
</html>
